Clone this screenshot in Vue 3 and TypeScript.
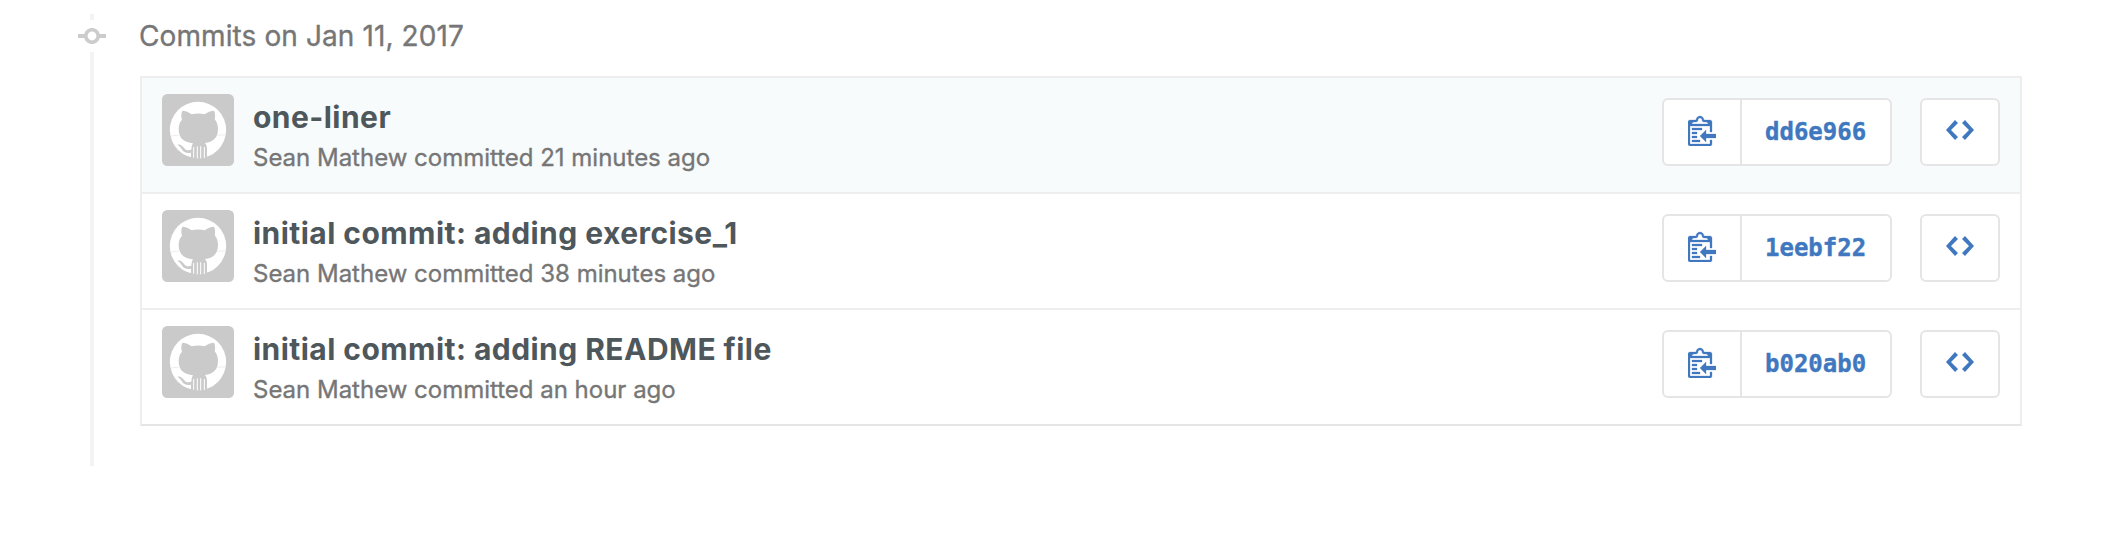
<script setup lang="ts">
interface Commit {
  sha: string
  title: string
  author: string
  when: string
}

const commits: Commit[] = [
  { sha: 'dd6e966', title: 'one-liner', author: 'Sean Mathew', when: '21 minutes ago' },
  { sha: '1eebf22', title: 'initial commit: adding exercise_1', author: 'Sean Mathew', when: '38 minutes ago' },
  { sha: 'b020ab0', title: 'initial commit: adding README file', author: 'Sean Mathew', when: 'an hour ago' },
]
</script>

<template>
  <main class="page">
    <section class="timeline">
      <header class="group-title">
        <span class="node">
          <svg width="28" height="32" viewBox="0 0 14 16"><path d="M10.86 7c-.45-1.72-2-3-3.86-3-1.86 0-3.41 1.28-3.86 3H0v2h3.14c.45 1.72 2 3 3.86 3 1.86 0 3.41-1.28 3.86-3H14V7h-3.14zM7 10.2c-1.22 0-2.2-.98-2.2-2.2 0-1.22.98-2.2 2.2-2.2 1.22 0 2.2.98 2.2 2.2 0 1.22-.98 2.2-2.2 2.2z" /></svg>
        </span>
        <h3>Commits on Jan 11, 2017</h3>
      </header>
      <ol class="commits">
        <li v-for="c in commits" :key="c.sha" class="commit">
          <svg class="avatar" width="72" height="72" viewBox="0 0 216 216">
            <rect width="216" height="216" rx="16" fill="#cacaca" />
            <circle cx="108" cy="108" r="84.5" fill="#fff" />
            <path fill="#cacaca" d="M61 50c9 0 20 5 28 11 12-3 27-3 39 0 8-6 19-11 28-11 4 8 4 18 2 26 7 8 10 18 10 29 0 28-16 39-39 42 4 5 6 10 6 17v30H87v-18c-20 3-24-5-30-14-3-5-7-7-10-10 11-2 16 7 21 12 6 6 13 5 20 3 0-7 2-14 5-19-25-3-43-13-43-43 0-11 3-20 10-28-3-9-3-18 1-27z" />
            <path d="M95 160v30M106 158v34M116 158v34M127 160v31" stroke="#fff" stroke-width="3" stroke-linecap="round" />
            <path d="M26 127q12-4 24-3M166 124q13-2 25-1" stroke="#e3e3e3" stroke-width="2" fill="none" />
          </svg>
          <div class="info">
            <p class="title">{{ c.title }}</p>
            <p class="meta">{{ c.author }} committed {{ c.when }}</p>
          </div>
          <div class="links">
            <div class="group">
              <button class="copy" type="button" aria-label="Copy the full SHA">
                <svg width="28" height="32" viewBox="0 0 14 16"><path d="M2 13h4v1H2v-1zm5-6H2v1h5V7zm2 3V8l-3 3 3 3v-2h5v-2H9zM4.5 9H2v1h2.5V9zM2 12h2.5v-1H2v1zm9 1h1v2c-.02.28-.11.52-.3.7-.19.18-.42.28-.7.3H1c-.55 0-1-.45-1-1V4c0-.55.45-1 1-1h3c0-1.11.89-2 2-2 1.11 0 2 .89 2 2h3c.55 0 1 .45 1 1v5h-1V6H1v9h10v-2zM2 5h8c0-.55-.45-1-1-1H8c-.55 0-1-.45-1-1s-.45-1-1-1-1 .45-1 1-.45 1-1 1H3c-.55 0-1 .45-1 1z" /></svg>
              </button>
              <a class="sha">{{ c.sha }}</a>
            </div>
            <a class="browse" aria-label="Browse the repository at this point">
              <svg width="28" height="32" viewBox="0 0 14 16"><path d="M9.5 3L8 4.5 11.5 8 8 11.5 9.5 13 14 8 9.5 3zm-5 0L0 8l4.5 5L6 11.5 2.5 8 6 4.5 4.5 3z" /></svg>
            </a>
          </div>
        </li>
      </ol>
    </section>
  </main>
</template>

<style>
body {
  background: #fff;
}
</style>

<style scoped>
.page {
  box-sizing: border-box;
  height: 548px;
  padding: 14px 90px 0;
  font-family: Inter, "Liberation Sans", sans-serif;
  color: #767676;
}
.timeline {
  box-sizing: border-box;
  height: 452px;
  border-left: 4px solid #f3f3f3;
}
.group-title {
  display: flex;
  align-items: center;
  height: 62px;
  padding-bottom: 18px;
  box-sizing: border-box;
}
.node {
  flex: none;
  width: 28px;
  height: 32px;
  margin-left: -16px;
  background: #fff;
}
svg {
  display: block;
}
.node svg {
  fill: #ccc;
}
h3 {
  margin: 0 0 0 33px;
  font-size: 28px;
  line-height: 40px;
  font-weight: 400;
  letter-spacing: 0.1px;
  white-space: nowrap;
  -webkit-text-stroke: 0.35px #767676;
}
.commits {
  list-style: none;
  box-sizing: border-box;
  width: 1882px;
  margin: 0 0 0 46px;
  padding: 0;
  border: 2px solid #eee;
  border-bottom-color: #e5e5e5;
}
.commit {
  display: flex;
  align-items: flex-start;
  box-sizing: border-box;
  height: 116px;
  padding: 16px 20px 0;
  border-bottom: 2px solid #eee;
}
.commit:first-child {
  background: #f7fbfc;
}
.commit:last-child {
  height: 114px;
  border-bottom: 0;
}
.avatar {
  flex: none;
}
.info {
  flex: 1;
  margin-left: 19px;
  white-space: nowrap;
}
.title,
.meta {
  margin: 0;
}
.title {
  margin-top: 3px;
  font-size: 30px;
  line-height: 40px;
  font-weight: 700;
  letter-spacing: 0.45px;
  color: #4e575b;
}
.meta {
  margin-top: 1px;
  font-size: 24px;
  line-height: 40px;
  font-weight: 400;
  letter-spacing: -0.01px;
  -webkit-text-stroke: 0.35px #767676;
}
.links {
  display: flex;
  gap: 28px;
  margin-top: 4px;
}
.group {
  display: flex;
}
.copy,
.sha,
.browse {
  display: flex;
  box-sizing: border-box;
  height: 68px;
  padding: 14px 24px 0;
  border: 2px solid #e5e5e5;
  background: #fff;
  color: #4078c0;
}
.copy {
  width: 80px;
  border-radius: 6px 0 0 6px;
}
.sha {
  width: 152px;
  margin-left: -2px;
  padding: 0 0 0 23px;
  border-radius: 0 6px 6px 0;
  font: 700 24px/64px "DejaVu Sans Mono", monospace;
  -webkit-text-stroke: 0.4px #4078c0;
}
.browse {
  width: 80px;
  border-radius: 6px;
}
.copy svg,
.browse svg {
  fill: #4078c0;
}
.copy svg {
  stroke: #4078c0;
  stroke-width: 0.14;
}
</style>
